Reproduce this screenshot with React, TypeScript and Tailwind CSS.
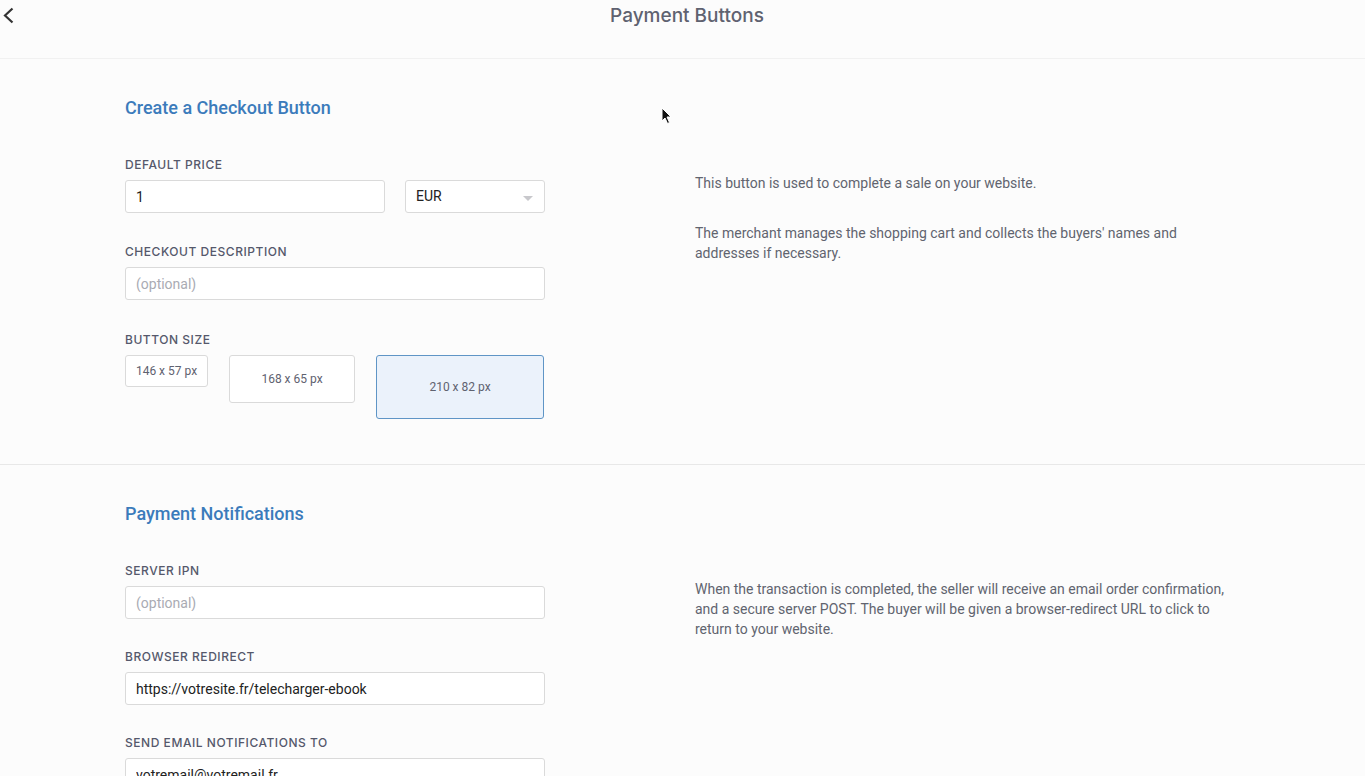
const labelCls =
  "block font-['Inter',sans-serif] text-[12px] leading-4 font-medium tracking-[0.045em] text-[#55586b] uppercase";
const boxCls =
  "h-[33px] rounded-[3px] border border-[#dadada] bg-white px-[10px] text-[14px] text-[#222] placeholder:text-[#a9abb3] outline-none";

const Field = ({
  label,
  value,
  className = "",
}: {
  label: string;
  value?: string;
  className?: string;
}) => (
  <div className={className}>
    <label className={labelCls}>{label}</label>
    <input
      className={`${boxCls} mt-[7px] w-full`}
      defaultValue={value}
      placeholder="(optional)"
    />
  </div>
);

const sizes = [
  { label: "146 x 57 px", cls: "h-8 w-[83px]" },
  { label: "168 x 65 px", cls: "h-[48px] w-[126px]" },
  { label: "210 x 82 px", cls: "h-16 w-[168px]", active: true },
];

export default function App() {
  return (
    <div className="relative min-h-screen bg-[#fcfcfc] font-['Roboto',sans-serif] text-[#5f6270]">
      <header className="relative flex h-[59px] justify-center border-b border-[#f1f1f1] pl-[9px]">
        <button className="absolute left-0 top-0 text-[#333]">
          <svg width="16" height="30" viewBox="0 0 16 30" fill="none">
            <path
              d="M12.5 8.5 L5 15.5 L12.5 22.5"
              stroke="currentColor"
              strokeWidth="2.2"
            />
          </svg>
        </button>
        <h1 className="mt-[4px] font-['Inter',sans-serif] text-[19px] leading-[23px] font-medium text-[#5f6270]">
          Payment Buttons
        </h1>
      </header>

      <section className="border-b border-[#e8e8e8] pl-[125px] pt-[37px] pb-[45px]">
        <h2 className="text-[18px] leading-6 font-medium text-[#3b7bbb]">
          Create a Checkout Button
        </h2>
        <div className="mt-[37px] flex">
          <div className="w-[420px]">
            <label className={labelCls}>Default Price</label>
            <div className="mt-[7px] flex gap-5">
              <input className={`${boxCls} w-[260px]`} defaultValue="1" />
              <div className="relative flex h-[33px] w-[140px] items-center rounded-[3px] border border-[#dadada] bg-white px-[10px] text-[14px] text-[#222]">
                EUR
                <span className="absolute right-[11px] top-[15px] h-0 w-0 border-x-[5px] border-t-[5px] border-x-transparent border-t-[#c8c8cc]" />
              </div>
            </div>

            <Field label="Checkout Description" className="mt-[31px]" />

            <div className="mt-[32px]">
              <label className={labelCls}>Button Size</label>
              <div className="mt-[7px] flex items-start gap-[21px]">
                {sizes.map((s) => (
                  <button
                    key={s.label}
                    className={`${s.cls} rounded-[3px] border text-[12px] text-[#5f6270] ${
                      s.active
                        ? "border-[#5f95c6] bg-[#ebf2fb]"
                        : "border-[#dadada] bg-white"
                    }`}
                  >
                    {s.label}
                  </button>
                ))}
              </div>
            </div>
          </div>
          <div className="ml-[150px] w-[540px] pt-4 text-[14px] leading-5 text-[#61646f]">
            <p>This button is used to complete a sale on your website.</p>
            <p className="mt-[30px]">
              The merchant manages the shopping cart and collects the buyers'
              names and addresses if necessary.
            </p>
          </div>
        </div>
      </section>

      <section className="pl-[125px] pt-[37px] pb-10">
        <h2 className="text-[18px] leading-6 font-medium text-[#3b7bbb]">
          Payment Notifications
        </h2>
        <div className="mt-[37px] flex">
          <div className="w-[420px]">
            <Field label="Server IPN" />
            <Field
              label="Browser Redirect"
              value="https://votresite.fr/telecharger-ebook"
              className="mt-[30px]"
            />
            <Field
              label="Send Email Notifications To"
              value="votremail@votremail.fr"
              className="mt-[30px]"
            />
          </div>
          <div className="ml-[150px] w-[540px] pt-4 text-[14px] leading-5 text-[#61646f]">
            <p>
              When the transaction is completed, the seller will receive an
              email order confirmation, and a secure server POST. The buyer will
              be given a browser-redirect URL to click to return to your
              website.
            </p>
          </div>
        </div>
      </section>

      {/* mouse pointer */}
      <svg
        className="pointer-events-none absolute left-[661px] top-[107px]"
        width="12"
        height="18"
        viewBox="0 0 12 18"
      >
        <path
          d="M1 1 L1 14 L4 11 L6.5 16.5 L8.5 15.5 L6 10 L10 10 Z"
          fill="#111"
          stroke="#fff"
          strokeWidth="1"
        />
      </svg>
    </div>
  );
}
